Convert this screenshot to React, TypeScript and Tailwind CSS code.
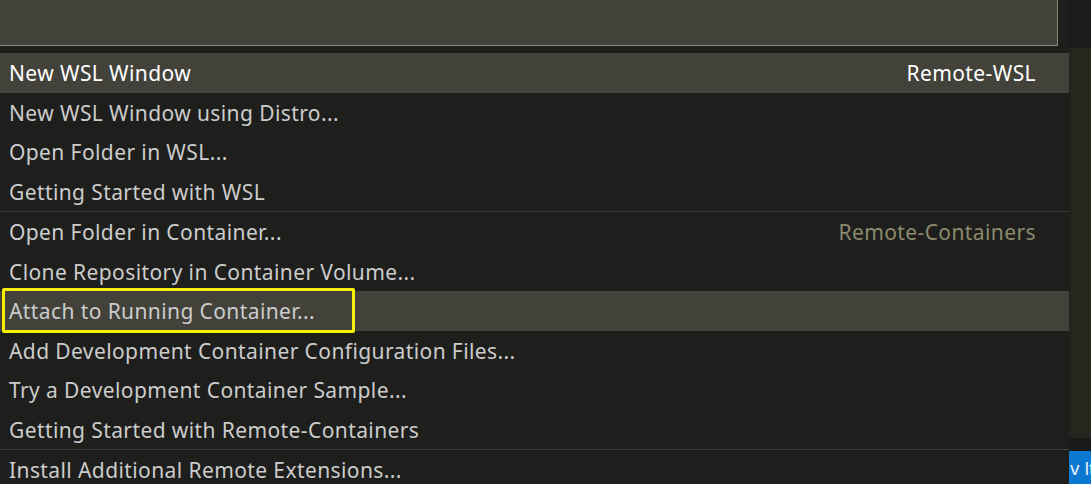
import React from 'react';

type Item = { label: string; detail?: string; active?: boolean; focused?: boolean; sepBefore?: boolean };

const ITEMS: Item[] = [
  { label: 'New WSL Window', detail: 'Remote-WSL', active: true },
  { label: 'New WSL Window using Distro...' },
  { label: 'Open Folder in WSL...' },
  { label: 'Getting Started with WSL' },
  { label: 'Open Folder in Container...', detail: 'Remote-Containers', sepBefore: true },
  { label: 'Clone Repository in Container Volume...' },
  { label: 'Attach to Running Container...', focused: true },
  { label: 'Add Development Container Configuration Files...' },
  { label: 'Try a Development Container Sample...' },
  { label: 'Getting Started with Remote-Containers' },
  { label: 'Install Additional Remote Extensions...', sepBefore: true },
];

const Row = ({ item }: { item: Item }) => (
  <>
    {item.sepBefore && <div className="h-px shrink-0 bg-[#3d3d3a]" />}
    <div
      className={`relative shrink-0 flex items-center justify-between h-[39.5px] pl-[9px] pr-[33px] pt-[2px] ${
        item.active || item.focused ? 'bg-[#42423a]' : ''
      }`}
    >
      <span className={item.active ? 'text-white' : 'text-[#cccccc]'}>{item.label}</span>
      {item.detail && (
        <span className={item.active ? 'text-white' : 'text-[#8b8a6d]'}>{item.detail}</span>
      )}
      {item.focused && (
        <div className="absolute left-[2px] top-[-3px] w-[353px] h-[45px] border-[3px] border-[#f7f000] rounded-[2px]" />
      )}
    </div>
  </>
);

export default function App() {
  return (
    <div
      className="flex w-[1091px] h-[484px] overflow-hidden bg-[#1e1e1c] text-[21px] tracking-[0.4px] leading-none"
      style={{ fontFamily: '"Noto Sans", "Open Sans", sans-serif' }}
    >
      <div className="w-[1069px] shrink-0 flex flex-col">
        <div className="h-[46px] shrink-0 w-[1058px] bg-[#42423a] border-b border-r border-[#8a8a78]" />
        <div className="h-[7px] shrink-0" />
        {ITEMS.map((it) => (
          <Row key={it.label} item={it} />
        ))}
      </div>
      <div className="w-[22px] flex flex-col">
        <div className="h-[48px] shrink-0 bg-[#1b1b19]" />
        <div className="h-[390px] shrink-0 bg-[#26261f] border-l-2 border-[#212120]" />
        <div className="h-[13px] shrink-0 bg-[#1a1a1a]" />
        <div className="flex-1 bg-[#0a78d0] text-[#e6f0fa] text-[19px] tracking-normal flex items-center whitespace-nowrap pl-[1px] pt-[2px] overflow-hidden font-['Liberation_Sans',sans-serif]">
          v lt
        </div>
      </div>
    </div>
  );
}
